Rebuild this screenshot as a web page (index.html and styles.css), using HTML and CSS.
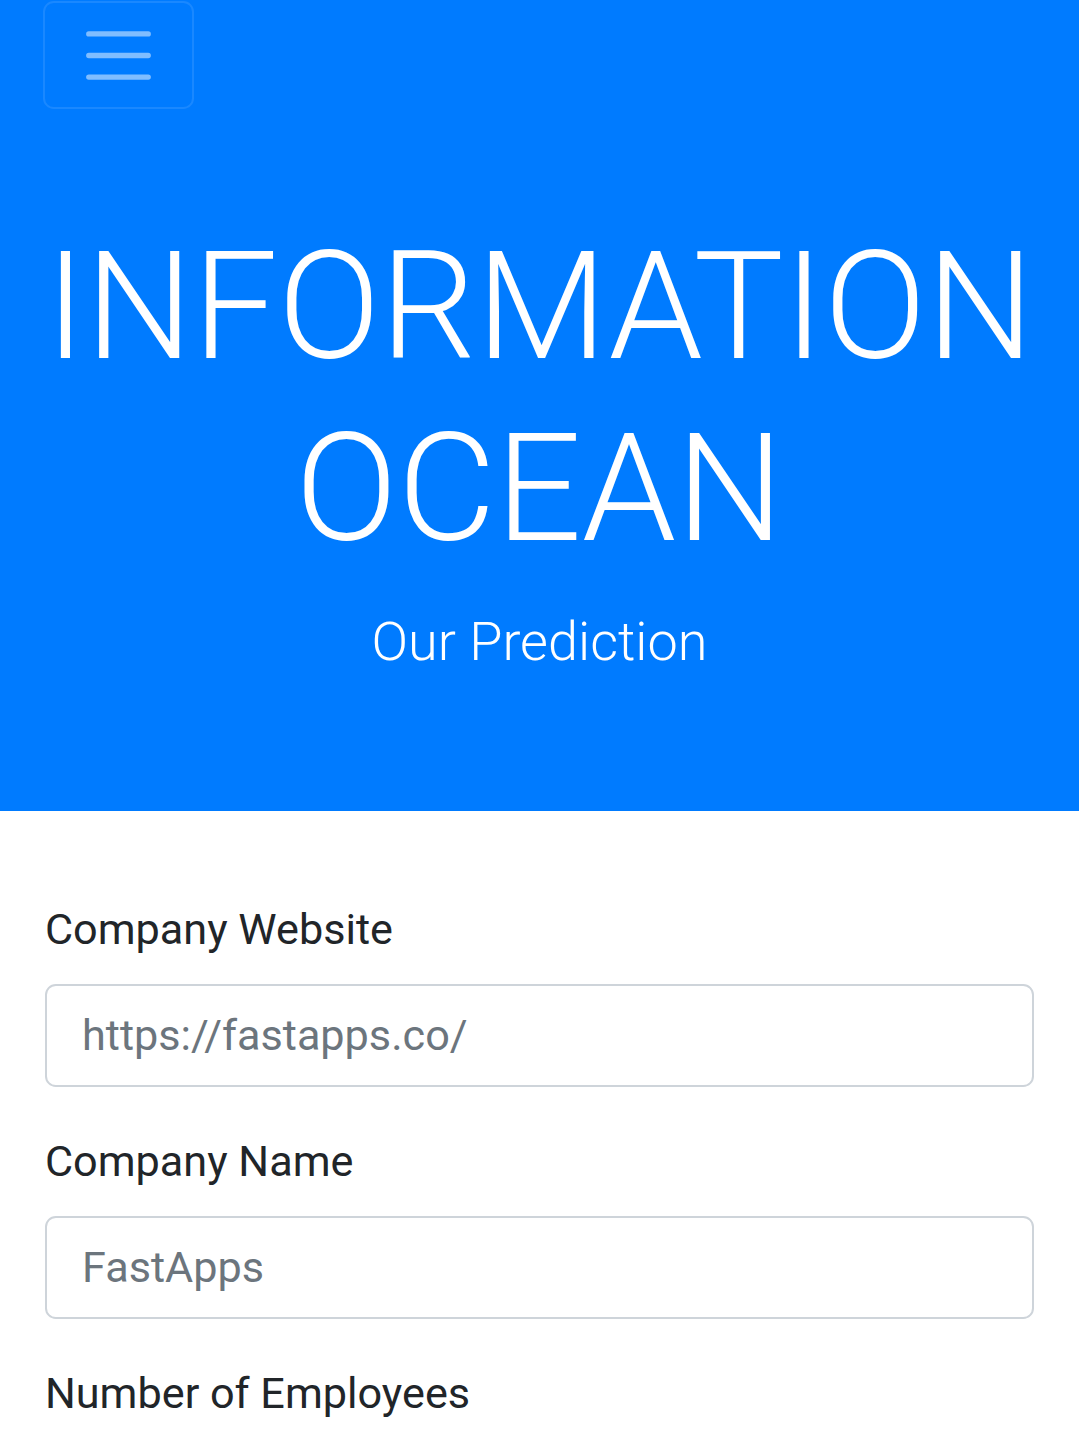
FILE: index.html
```html
<!DOCTYPE html>
<html lang="en">
<head>
<meta charset="utf-8">
<title>Information Ocean</title>
<link rel="stylesheet" href="styles.css">
</head>
<body>
<header class="hero">
  <nav class="navbar">
    <button class="toggler" type="button" aria-label="Toggle navigation">
      <svg class="toggler-icon" viewBox="0 0 30 30" width="81" height="81">
        <path d="M4 7h22M4 15h22M4 23h22" stroke="rgba(255,255,255,0.5)" stroke-width="2" stroke-linecap="round" stroke-miterlimit="10" fill="none"/>
      </svg>
    </button>
  </nav>
  <div class="jumbo">
    <h1 class="display">INFORMATION OCEAN</h1>
    <p class="lead">Our Prediction</p>
  </div>
</header>
<main class="form">
  <div class="group">
    <label class="label" for="site">Company Website</label>
    <input class="control" id="site" type="text" placeholder="https://fastapps.co/">
  </div>
  <div class="group">
    <label class="label" for="name">Company Name</label>
    <input class="control" id="name" type="text" placeholder="FastApps">
  </div>
  <div class="group">
    <label class="label" for="emp">Number of Employees</label>
    <input class="control" id="emp" type="text">
  </div>
</main>
</body>
</html>
```

FILE: styles.css
```css
html, body {
  margin: 0;
  padding: 0;
}
body {
  font-family: Roboto, "Liberation Sans", sans-serif;
  color: #212529;
  background: #fff;
}
.hero {
  background: #007bff;
  color: #fff;
}
.navbar {
  display: flex;
  padding: 1px 43.2px 21px;
}
.toggler {
  display: flex;
  align-items: center;
  justify-content: center;
  box-sizing: border-box;
  width: 151px;
  height: 108px;
  padding: 10.8px 32.4px;
  background: transparent;
  border: 2.7px solid rgba(255,255,255,0.1);
  border-radius: 10.8px;
}
.toggler-icon {
  display: block;
  width: 81px;
  height: 81px;
}
.jumbo {
  padding: 86.4px 43.2px;
  text-align: center;
}
.display {
  margin: 0 0 21.6px;
  font-size: 151.2px;
  font-weight: 300;
  line-height: 1.2;
}
.lead {
  margin: 0 0 43.2px;
  font-size: 54px;
  font-weight: 300;
  line-height: 1.5;
}
.form {
  padding: 86.4px 45px 0;
}
.group {
  display: flex;
  flex-direction: column;
  margin-bottom: 43.2px;
}
.label {
  font-size: 43.2px;
  line-height: 1.5;
  margin-bottom: 21.6px;
  color: #212529;
}
.control {
  box-sizing: border-box;
  width: 100%;
  height: 102.6px;
  padding: 16.2px 35px;
  font-family: Roboto, "Liberation Sans", sans-serif;
  font-size: 43.2px;
  line-height: 1.5;
  color: #495057;
  background: #fff;
  border: 2.7px solid #ced4da;
  border-radius: 10.8px;
  outline: none;
}
.control::placeholder {
  color: #6c757d;
  opacity: 1;
}
```
